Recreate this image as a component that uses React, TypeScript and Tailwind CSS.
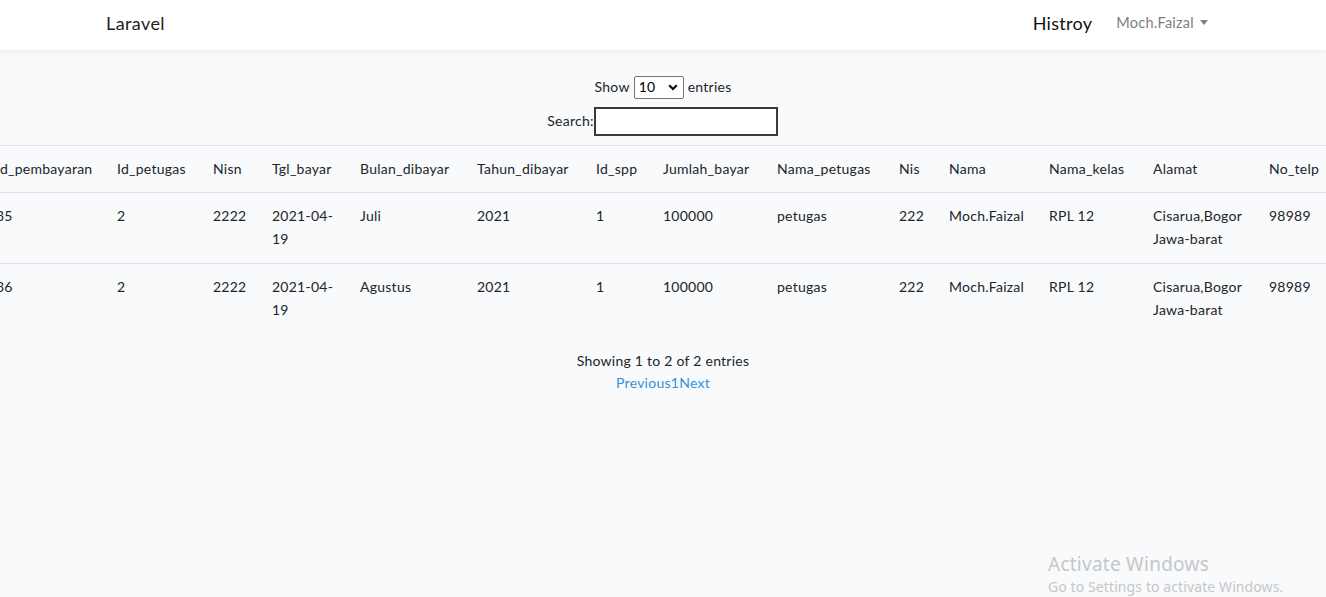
import React from "react";

const cols = [
  { h: "Id_pembayaran", w: 121 },
  { h: "Id_petugas", w: 96 },
  { h: "Nisn", w: 59 },
  { h: "Tgl_bayar", w: 88 },
  { h: "Bulan_dibayar", w: 117 },
  { h: "Tahun_dibayar", w: 119 },
  { h: "Id_spp", w: 67 },
  { h: "Jumlah_bayar", w: 114 },
  { h: "Nama_petugas", w: 122 },
  { h: "Nis", w: 50 },
  { h: "Nama", w: 100 },
  { h: "Nama_kelas", w: 104 },
  { h: "Alamat", w: 116 },
  { h: "No_telp", w: 74 },
];

const rows = [
  ["35", "2", "2222", "2021-04-19", "Juli", "2021", "1", "100000", "petugas", "222", "Moch.Faizal", "RPL 12", "Cisarua,Bogor Jawa-barat", "98989"],
  ["36", "2", "2222", "2021-04-19", "Agustus", "2021", "1", "100000", "petugas", "222", "Moch.Faizal", "RPL 12", "Cisarua,Bogor Jawa-barat", "98989"],
];

export default function App() {
  return (
    <div
      className="min-h-[597px] w-full bg-[#f8fafc] text-[#212529] text-[14px] leading-[1.6] tracking-[0.25px] overflow-hidden relative"
      style={{ fontFamily: "Lato, 'Noto Sans', sans-serif" }}
    >
      <nav className="h-[50px] bg-white shadow-[0_2px_4px_rgba(0,0,0,0.06)] flex items-center justify-between pl-[106px] pr-[118px] pb-[4px] relative z-10">
        <span className="text-[18px] text-[#1d2124] tracking-[0.4px]">Laravel</span>
        <div className="flex items-center">
          <span className="text-[18px] text-[#111] mr-[24px] tracking-[0.3px]">Histroy</span>
          <span className="text-[14.5px] text-[#808080] flex items-center">
            Moch.Faizal
            <span className="ml-[6px] inline-block w-0 h-0 border-l-[4.5px] border-r-[4.5px] border-t-[5px] border-l-transparent border-r-transparent border-t-[#808080]" />
          </span>
        </div>
      </nav>

      <div className="pt-[25px] flex flex-col items-center">
        <div className="flex items-center h-[24px]">
          <span>Show</span>
          <div className="mx-[4px] w-[50px] h-[23px] border border-[#767676] rounded-[2px] bg-white flex items-center justify-between pl-[4px] pr-[5px] text-[14px] text-black">
            <span>10</span>
            <svg width="10" height="7" viewBox="0 0 10 7">
              <path d="M1.2 1.2 L5 5 L8.8 1.2" stroke="#000" strokeWidth="2" fill="none" />
            </svg>
          </div>
          <span>entries</span>
        </div>
        <div className="flex items-center mt-[8px] ml-[-1px]">
          <span>Search:</span>
          <input className="w-[184px] h-[29px] border-2 border-[#3a3a3a] bg-white outline-none" />
        </div>
      </div>

      <div className="mt-[9px] overflow-hidden">
        <table className="table-fixed border-collapse ml-[-16px] w-[1347px]">
          <colgroup>
            {cols.map((c, i) => (
              <col key={i} style={{ width: c.w }} />
            ))}
          </colgroup>
          <thead>
            <tr className="border-t border-b border-[#dee2e6]">
              {cols.map((c, i) => (
                <th key={i} className="p-[12px] font-normal text-left align-bottom whitespace-nowrap">
                  {c.h}
                </th>
              ))}
            </tr>
          </thead>
          <tbody>
            {rows.map((r, ri) => (
              <tr key={ri} className={ri > 0 ? "border-t border-[#dee2e6]" : ""}>
                {r.map((v, ci) => (
                  <td key={ci} className="p-[12px] align-top h-[71px]">
                    {v}
                  </td>
                ))}
              </tr>
            ))}
          </tbody>
        </table>
      </div>

      <div className="flex flex-col items-center mt-[15px]">
        <div>Showing 1 to 2 of 2 entries</div>
        <div className="text-[#3490dc]">
          <span>Previous</span>
          <span>1</span>
          <span>Next</span>
        </div>
      </div>

      <div
        className="absolute left-[1048px] top-[551px] text-[#c5c7c9]"
        style={{ fontFamily: "'Noto Sans', 'Open Sans', sans-serif" }}
      >
        <div className="text-[19px] leading-[26px]">Activate Windows</div>
        <div className="text-[14px] leading-[20px] tracking-[0.1px]">Go to Settings to activate Windows.</div>
      </div>
    </div>
  );
}
